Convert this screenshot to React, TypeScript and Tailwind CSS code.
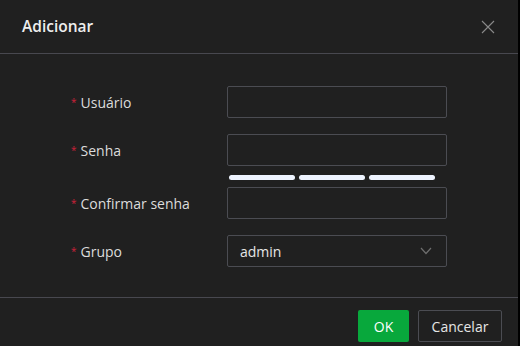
const fields = [
  { label: 'Usuário', kind: 'input' },
  { label: 'Senha', kind: 'password' },
  { label: 'Confirmar senha', kind: 'input' },
  { label: 'Grupo', kind: 'select' },
];

const Label = ({ text }: { text: string }) => (
  <div className="flex items-center h-8 text-[14px] text-[#dcdcdc]">
    <span className="text-[#d0213a] text-[10px] mr-[4px] leading-none">*</span>
    {text}
  </div>
);

const App = () => {
  return (
    <div
      className="w-[520px] h-[346px] bg-black flex"
      style={{ fontFamily: '"Open Sans", "Noto Sans", sans-serif' }}
    >
      <div className="w-[518px] h-full bg-[#202020] flex flex-col">
        <header className="h-[54px] px-[22px] flex items-center justify-between border-b border-[#48484f]">
          <h2 className="text-[15.5px] font-semibold text-[#eeeeee]">Adicionar</h2>
          <svg width="14" height="14" viewBox="0 0 14 14" className="mr-[1px]">
            <path d="M1 1 L13 13 M13 1 L1 13" stroke="#8a8a8a" strokeWidth="1.1" fill="none" />
          </svg>
        </header>

        <div className="flex-1 pt-[32px] pl-[71px] flex flex-col gap-4 border-b border-[#48484f]">
          {fields.map((f) => (
            <div key={f.label} className="flex">
              <div className="w-[156px]">
                <Label text={f.label} />
              </div>
              <div className="flex flex-col">
                {f.kind === 'select' ? (
                  <div className="w-[220px] h-8 border border-[#4b4c52] rounded-[2px] flex items-center justify-between pl-[12px] pr-[14px] text-[14px] text-[#e6e6e6]">
                    admin
                    <svg width="12" height="8" viewBox="0 0 12 8">
                      <path d="M1 1 L6 6.5 L11 1" stroke="#6e6e6e" strokeWidth="1.2" fill="none" />
                    </svg>
                  </div>
                ) : (
                  <div className="w-[220px] h-8 border border-[#4b4c52] rounded-[2px]" />
                )}
                {f.kind === 'password' && (
                  <div className="flex gap-[4px] pl-[2px] mt-[9px] -mb-[9px]">
                    <div className="w-[66px] h-[5px] rounded-full bg-[#eef4ff]" />
                    <div className="w-[66px] h-[5px] rounded-full bg-[#eef4ff]" />
                    <div className="w-[66px] h-[5px] rounded-full bg-[#eef4ff]" />
                  </div>
                )}
              </div>
            </div>
          ))}
        </div>

        <footer className="h-[48px] pt-[12px] pr-[16px] flex justify-end gap-[9px]">
          <button className="w-[51px] h-8 bg-[#08a83c] rounded-[2px] text-[14px] text-white">OK</button>
          <button className="w-[84px] h-8 border border-[#4b4c52] rounded-[2px] text-[14px] text-[#e6e6e6]">
            Cancelar
          </button>
        </footer>
      </div>
    </div>
  );
};

export default App;
